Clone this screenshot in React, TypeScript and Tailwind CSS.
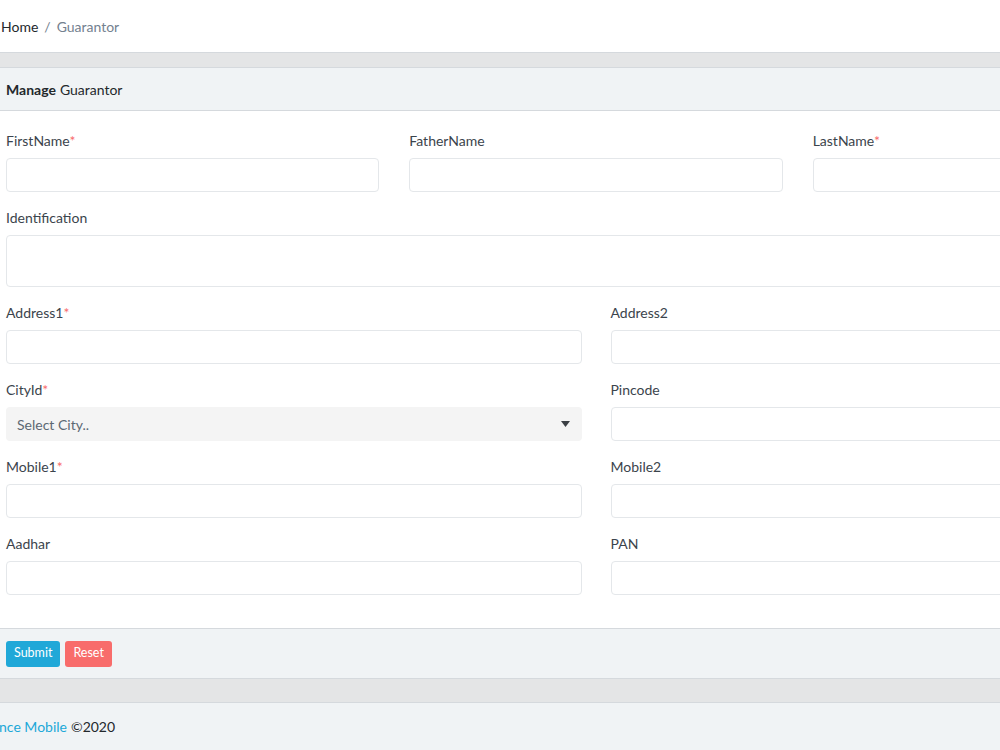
import type { ReactNode } from 'react'

function Label({ children, required }: { children: ReactNode; required?: boolean }) {
  return (
    <label className="block text-[14px] leading-[21px] mb-[7px] text-[#3b444c]">
      {children}
      {required && <span className="text-[#f86c6b]">*</span>}
    </label>
  )
}

function Field({ label, required }: { label: string; required?: boolean }) {
  return (
    <div className="mb-[15px]">
      <Label required={required}>{label}</Label>
      <input
        type="text"
        className="block w-full h-[34px] px-3 rounded-[4px] border border-[#e4e7ea] bg-white text-[14px] focus:outline-none"
      />
    </div>
  )
}

function App() {
  return (
    <div
      className="w-[1000px] h-[750px] overflow-hidden bg-[#e4e5e6] flex flex-col"
      style={{ fontFamily: 'Lato, "Open Sans", sans-serif' }}
    >
      {/* breadcrumb */}
      <div className="h-[53px] shrink-0 bg-white border-b border-[#d5d9dd] flex items-center text-[14px]">
        <span className="text-[#23282c] pl-[1px]">Home</span>
        <span className="text-[#73818f] px-[6px]">/</span>
        <span className="text-[#73818f]">Guarantor</span>
      </div>

      <div className="h-[14px] shrink-0" />

      {/* card */}
      <div className="w-[1220px] shrink-0 border-y border-[#d5d9dd] bg-white">
        <div className="h-[43px] bg-[#f0f3f5] border-b border-[#d5d9dd] flex items-center pl-[6px] text-[14px] text-[#23282c]">
          <strong className="font-bold mr-1">Manage</strong> Guarantor
        </div>

        <div className="pl-[6px] pt-[19px] pb-[18px]">
          <div className="w-[1180px]">
            <div className="grid grid-cols-3 gap-x-[30px]">
              <Field label="FirstName" required />
              <Field label="FatherName" />
              <Field label="LastName" required />
            </div>

            <div className="mb-[15px]">
              <Label>Identification</Label>
              <textarea className="block w-full h-[52px] rounded-[4px] border border-[#e4e7ea] resize-none focus:outline-none" />
            </div>

            <div className="grid grid-cols-2 gap-x-[29px]">
              <Field label="Address1" required />
              <Field label="Address2" />

              <div className="mb-[15px]">
                <Label required>CityId</Label>
                <div className="h-[34px] rounded-[4px] bg-[#f4f4f4] flex items-center justify-between pl-[11px] pr-[12px] text-[14px] text-[#5c6873]">
                  <span>Select City..</span>
                  <svg width="9" height="6" viewBox="0 0 9 6">
                    <path d="M0 0h9L4.5 6z" fill="#3b3f44" />
                  </svg>
                </div>
              </div>
              <Field label="Pincode" />

              <Field label="Mobile1" required />
              <Field label="Mobile2" />

              <Field label="Aadhar" />
              <Field label="PAN" />
            </div>
          </div>
        </div>

        <div className="h-[50px] bg-[#f0f3f5] border-t border-[#d5d9dd] flex items-center gap-[5px] pl-[6px]">
          <button className="h-[26px] px-[8px] rounded-[3px] bg-[#20a8d8] text-white text-[12.5px] leading-none">
            Submit
          </button>
          <button className="h-[26px] px-[8px] rounded-[3px] bg-[#f86c6b] text-white text-[12.5px] leading-none">
            Reset
          </button>
        </div>
      </div>

      <div className="h-[23px] shrink-0" />

      {/* footer */}
      <div className="flex-1 bg-[#f0f3f5] border-t border-[#d5d9dd] flex items-center text-[14px] -ml-[27px] pb-[1px]">
        <span className="text-[#20a8d8]">Finance Mobile</span>
        <span className="text-[#23282c] ml-1">©2020</span>
      </div>
    </div>
  )
}

export default App
